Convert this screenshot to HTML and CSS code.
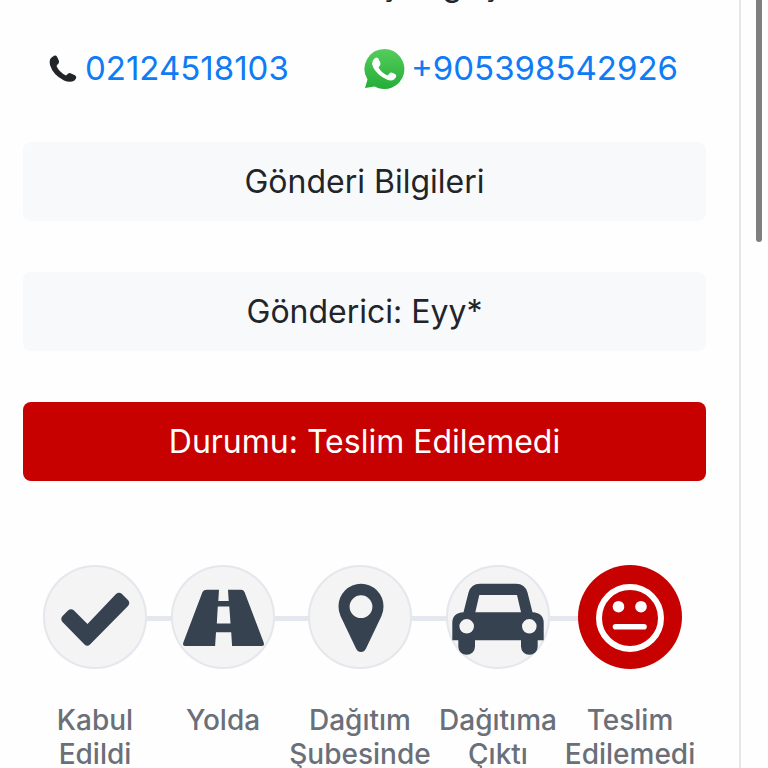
FILE: index.html
```html
<!DOCTYPE html>
<html lang="tr">
<head>
    <meta charset="UTF-8">
    <meta name="viewport" content="width=device-width, initial-scale=1.0">
    <title>Gönderi Takip</title>
    <link rel="stylesheet" href="styles.css">
</head>
<body>
    <main class="card">
        <p class="branch">Kat: Güneş Tuğuş</p>
        <div class="contacts">
            <div class="contact">
                <svg class="phone-icon" viewBox="0 0 28 28" aria-hidden="true">
                    <path fill="#212529" d="M2 3 L5 .8 Q7 0 8.200 2 L10 6 Q10.500 8 8.500 9.500 L7.500 11 Q10 17 17 20.500 L19 18.800 Q20.500 17.500 22 18.400 L26 20.300 Q28 21.500 27 23.500 L25.500 25.600 Q21 28 15 25.500 Q4 20 1 10 Q0 5 2 3Z"/>
                </svg>
                <a href="tel:02124518103">02124518103</a>
            </div>
            <div class="contact">
                <svg class="whatsapp-icon" viewBox="0 0 42 42" aria-hidden="true">
                    <defs>
                        <linearGradient id="wa" x1="0" y1="0" x2="0" y2="1">
                            <stop offset="0" stop-color="#55cd5c"/>
                            <stop offset="1" stop-color="#24ad37"/>
                        </linearGradient>
                    </defs>
                    <path fill="url(#wa)" d="M21.500 1 A20 20 0 1 1 11.500 38.400 L2 40 L4.500 31.500 A20 20 0 0 1 21.500 1Z"/>
                    <path fill="#fff" d="M11 11 Q13 8.500 15 10 L17.500 15 Q18 17 15.500 19.500 Q18.500 25 24.500 27.500 L27.500 24.500 Q29 24 33 26.800 Q34 29 31 31.500 Q27 34 20 29.500 Q11 24 9 16 Q9 13 11 11Z"/>
                </svg>
                <a href="https://wa.me/905398542926">+905398542926</a>
            </div>
        </div>

        <div class="info">Gönderi Bilgileri</div>
        <div class="info">Gönderici: Eyy*</div>
        <div class="info status">Durumu: Teslim Edilemedi</div>

        <ol class="steps">
            <li class="step">
                <svg class="step-icon" viewBox="0 0 104 104" aria-hidden="true">
                    <path fill="#36424f" d="M19.500 51 L25 45.500 Q28 43 31 45.500 L44.500 59 L73 29 Q76 26.500 79 29 L85 35 Q87.500 38 85 41 L47 79.500 Q44.300 82 41.500 79.500 L19.500 57 Q17 54 19.500 51Z"/>
                </svg>
                <span>Kabul Edildi</span>
            </li>
            <li class="step">
                <svg class="step-icon" viewBox="0 0 104 104" aria-hidden="true">
                    <path fill="#36424f" fill-rule="evenodd" d="M36 24.700 H48 L47.300 36 H57.700 L57 24.700 H70 Q72.500 24.700 73.500 27 L92.500 77 Q94 81 91 81 H61.100 L60.200 67.300 H45 L44.100 81 H14 Q11 81 12.500 77 L31.500 27 Q32.500 24.700 36 24.700Z M46.800 41.500 L45.800 58.500 H59.500 L58.300 41.500Z"/>
                </svg>
                <span>Yolda</span>
            </li>
            <li class="step">
                <svg class="step-icon" viewBox="0 0 104 104" aria-hidden="true">
                    <path fill="#36424f" fill-rule="evenodd" d="M53 18.700 A22.500 22.500 0 0 1 75.500 41.500 Q75.500 46.500 73.500 51 L58 83.500 Q56.300 87 53 87 T48 83.500 L32.500 51 Q30.500 46.500 30.500 41.500 A22.500 22.500 0 0 1 53 18.700Z M53 30.300 A11.400 11.400 0 1 0 53 53.100 A11.400 11.400 0 1 0 53 30.300Z"/>
                </svg>
                <span>Dağıtım Şubesinde</span>
            </li>
            <li class="step">
                <svg class="step-icon" viewBox="0 0 104 104" aria-hidden="true">
                    <path fill="#36424f" fill-rule="evenodd" d="M34 18.700 H70 Q79 18.700 81.500 27.500 L86.500 47.300 Q97.700 48 97.700 58 V75.300 H91.700 V81.500 A8.350 8.350 0 0 1 75 81.500 V75.300 H29 V81.500 A8.350 8.350 0 0 1 12.300 81.500 V75.300 H6.300 V58 Q6.300 48 17.500 47.300 L22.500 27.500 Q25 18.700 34 18.700Z M33.300 30 L29.300 47.300 H75 L71 30Z M20.700 54 A7.300 7.300 0 1 0 20.700 68.600 A7.300 7.300 0 1 0 20.700 54Z M83.300 54 A7.300 7.300 0 1 0 83.300 68.600 A7.300 7.300 0 1 0 83.300 54Z"/>
                </svg>
                <span>Dağıtıma Çıktı</span>
            </li>
            <li class="step failed">
                <svg class="step-icon" viewBox="0 0 104 104" aria-hidden="true">
                    <circle cx="52" cy="53" r="31" fill="none" stroke="#fff" stroke-width="6"/>
                    <circle cx="40.500" cy="41.700" r="5.800" fill="#fff"/>
                    <circle cx="63" cy="41.700" r="5.800" fill="#fff"/>
                    <path d="M37.500 61.700 H66" stroke="#fff" stroke-width="5.600" stroke-linecap="round"/>
                </svg>
                <span>Teslim Edilemedi</span>
            </li>
        </ol>
    </main>
    <div class="scroll-thumb"></div>
</body>
</html>
```
FILE: styles.css
```css
* {
    box-sizing: border-box;
}
body {
    margin: 0;
    height: 100vh;
    overflow: hidden;
    background: #fefefe;
    color: #212529;
    font-family: Inter, "Liberation Sans", sans-serif;
    font-size: 32px;
    line-height: 47px;
}
a {
    color: #0f7bf5;
    text-decoration: none;
}
.card {
    min-height: 100vh;
    margin-right: 27px;
    padding: 0 33px 0 23px;
    border-right: 2px solid #e4e5e7;
}
.branch {
    margin: -39px 0 37px;
    text-align: center;
}
.contacts {
    display: flex;
    justify-content: space-between;
    margin-bottom: 50px;
    padding: 0 28px 0 26px;
}
.contact {
    display: flex;
    align-items: center;
    gap: 6px;
    font-size: 33px;
}
.phone-icon {
    width: 28px;
    height: 28px;
    margin-right: 2px;
}
.whatsapp-icon {
    width: 42px;
    height: 42px;
}
.info {
    margin-bottom: 51px;
    padding: 16px;
    border-radius: 8px;
    background: #f8f9fb;
    text-align: center;
}
.status {
    background: #c70000;
    color: #fff;
}
.steps {
    display: grid;
    grid-template-columns: 128fr 128fr 146fr 130fr 134fr;
    margin: 84px 0 0;
    padding: 0 9px 0 8px;
    list-style: none;
}
.step {
    position: relative;
    display: flex;
    flex-direction: column;
    align-items: center;
    gap: 34px;
    color: #6b6f78;
    font-size: 28px;
    font-weight: 500;
    line-height: 34px;
    text-align: center;
}
/* line between the circles */
.step::before {
    content: "";
    position: absolute;
    top: 51px;
    left: 0;
    width: 100%;
    height: 5px;
    background: #e4e8ee;
}
.step:first-child::before {
    left: 50%;
    width: 50%;
}
.step:last-child::before {
    width: 50%;
}
.step-icon {
    position: relative;
    width: 104px;
    height: 104px;
    border-radius: 50%;
    background: #f4f4f5;
    box-shadow: inset 0 0 0 2px #e4e7ec;
}
.failed .step-icon {
    background: #c70000;
    box-shadow: none;
}
.scroll-thumb {
    position: fixed;
    top: -8px;
    right: 6px;
    width: 6px;
    height: 250px;
    border-radius: 3px;
    background: #7f7f7f;
}
```
